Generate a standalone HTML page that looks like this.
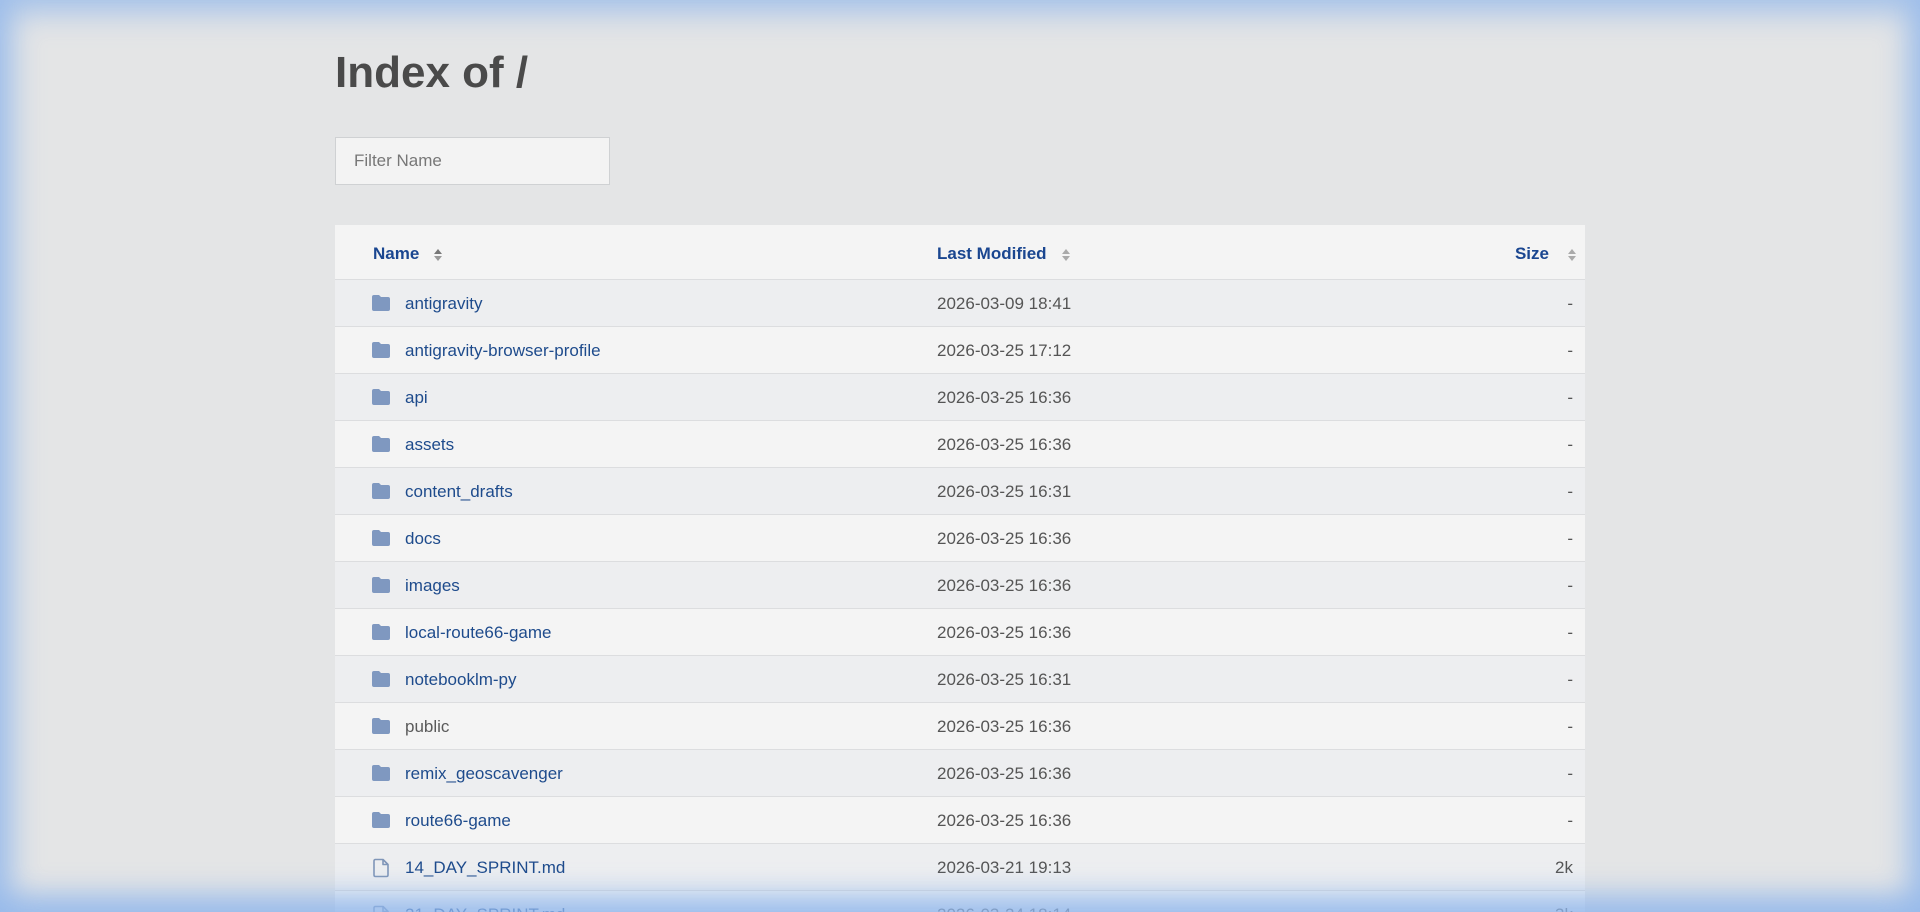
<!DOCTYPE html>
<html><head><meta charset="utf-8"><style>
html,body{margin:0;padding:0;width:1920px;height:912px;overflow:hidden;background:#e4e5e6;font-family:"Liberation Sans",sans-serif}
h1{position:absolute;left:335px;top:45px;margin:0;font-size:44px;font-weight:bold;color:#4a4a4a;line-height:56px}
.filter{position:absolute;left:335px;top:137px;width:275px;height:48px;background:#f3f3f3;border:1px solid #cfd1d3;box-sizing:border-box;font-size:17px;color:#777;padding-left:18px;line-height:46px}
.panel{position:absolute;left:335px;top:225px;width:1250px;height:687px;overflow:hidden;background:#f4f4f4}
.hdr{height:55px;position:relative;border-bottom:1px solid #dcdddf;box-sizing:border-box;font-weight:bold;color:#1a4690;font-size:17px}
.hdr span{position:absolute;top:19px}
.arr{display:inline-block;width:10px;height:14px;vertical-align:middle;margin-left:14px}
.row{height:47px;position:relative;border-bottom:1px solid #dcdddf;box-sizing:border-box;font-size:17px}
.row:nth-child(odd){background:#edeef0}
.row .n{position:absolute;left:70px;top:14px;color:#1e4b8c}
.row .d{position:absolute;left:602px;top:14px;color:#555}
.row .s{position:absolute;right:12px;top:14px;color:#555}
.row svg{position:absolute;left:36px;top:14px}
.glow{position:fixed;left:0;top:0;width:1920px;height:912px;pointer-events:none;box-shadow:inset 0 0 30px 12px rgba(140,180,235,.75),inset 0 -20px 30px -6px rgba(150,185,235,.6)}
</style></head><body>
<h1>Index of /</h1>
<div class="filter">Filter Name</div>
<div class="panel">
<div class="hdr">
<span style="left:38px">Name<svg class="arr" viewBox="0 0 10 14"><path d="M5 1L9 6H1z" fill="#777"/><path d="M5 13L9 8H1z" fill="#999"/></svg></span>
<span style="left:602px">Last Modified<svg class="arr" viewBox="0 0 10 14"><path d="M5 1L9 6H1z" fill="#aaa"/><path d="M5 13L9 8H1z" fill="#aaa"/></svg></span>
<span style="right:0px">Size<svg class="arr" style="margin-left:18px;margin-right:8px" viewBox="0 0 10 14"><path d="M5 1L9 6H1z" fill="#aaa"/><path d="M5 13L9 8H1z" fill="#aaa"/></svg></span>
</div>
<div>
<div class="row"><svg width="20" height="18" viewBox="0 0 20 18"><path d="M1 3Q1 1 3 1H8L10 3H17Q19 3 19 5V15Q19 17 17 17H3Q1 17 1 15Z" fill="#7f98c0"/></svg><span class="n">antigravity</span><span class="d">2026-03-09 18:41</span><span class="s">-</span></div>
<div class="row"><svg width="20" height="18" viewBox="0 0 20 18"><path d="M1 3Q1 1 3 1H8L10 3H17Q19 3 19 5V15Q19 17 17 17H3Q1 17 1 15Z" fill="#7f98c0"/></svg><span class="n">antigravity-browser-profile</span><span class="d">2026-03-25 17:12</span><span class="s">-</span></div>
<div class="row"><svg width="20" height="18" viewBox="0 0 20 18"><path d="M1 3Q1 1 3 1H8L10 3H17Q19 3 19 5V15Q19 17 17 17H3Q1 17 1 15Z" fill="#7f98c0"/></svg><span class="n">api</span><span class="d">2026-03-25 16:36</span><span class="s">-</span></div>
<div class="row"><svg width="20" height="18" viewBox="0 0 20 18"><path d="M1 3Q1 1 3 1H8L10 3H17Q19 3 19 5V15Q19 17 17 17H3Q1 17 1 15Z" fill="#7f98c0"/></svg><span class="n">assets</span><span class="d">2026-03-25 16:36</span><span class="s">-</span></div>
<div class="row"><svg width="20" height="18" viewBox="0 0 20 18"><path d="M1 3Q1 1 3 1H8L10 3H17Q19 3 19 5V15Q19 17 17 17H3Q1 17 1 15Z" fill="#7f98c0"/></svg><span class="n">content_drafts</span><span class="d">2026-03-25 16:31</span><span class="s">-</span></div>
<div class="row"><svg width="20" height="18" viewBox="0 0 20 18"><path d="M1 3Q1 1 3 1H8L10 3H17Q19 3 19 5V15Q19 17 17 17H3Q1 17 1 15Z" fill="#7f98c0"/></svg><span class="n">docs</span><span class="d">2026-03-25 16:36</span><span class="s">-</span></div>
<div class="row"><svg width="20" height="18" viewBox="0 0 20 18"><path d="M1 3Q1 1 3 1H8L10 3H17Q19 3 19 5V15Q19 17 17 17H3Q1 17 1 15Z" fill="#7f98c0"/></svg><span class="n">images</span><span class="d">2026-03-25 16:36</span><span class="s">-</span></div>
<div class="row"><svg width="20" height="18" viewBox="0 0 20 18"><path d="M1 3Q1 1 3 1H8L10 3H17Q19 3 19 5V15Q19 17 17 17H3Q1 17 1 15Z" fill="#7f98c0"/></svg><span class="n">local-route66-game</span><span class="d">2026-03-25 16:36</span><span class="s">-</span></div>
<div class="row"><svg width="20" height="18" viewBox="0 0 20 18"><path d="M1 3Q1 1 3 1H8L10 3H17Q19 3 19 5V15Q19 17 17 17H3Q1 17 1 15Z" fill="#7f98c0"/></svg><span class="n">notebooklm-py</span><span class="d">2026-03-25 16:31</span><span class="s">-</span></div>
<div class="row"><svg width="20" height="18" viewBox="0 0 20 18"><path d="M1 3Q1 1 3 1H8L10 3H17Q19 3 19 5V15Q19 17 17 17H3Q1 17 1 15Z" fill="#7f98c0"/></svg><span class="n" style="color:#5a5a5a">public</span><span class="d">2026-03-25 16:36</span><span class="s">-</span></div>
<div class="row"><svg width="20" height="18" viewBox="0 0 20 18"><path d="M1 3Q1 1 3 1H8L10 3H17Q19 3 19 5V15Q19 17 17 17H3Q1 17 1 15Z" fill="#7f98c0"/></svg><span class="n">remix_geoscavenger</span><span class="d">2026-03-25 16:36</span><span class="s">-</span></div>
<div class="row"><svg width="20" height="18" viewBox="0 0 20 18"><path d="M1 3Q1 1 3 1H8L10 3H17Q19 3 19 5V15Q19 17 17 17H3Q1 17 1 15Z" fill="#7f98c0"/></svg><span class="n">route66-game</span><span class="d">2026-03-25 16:36</span><span class="s">-</span></div>
<div class="row"><svg width="20" height="20" viewBox="0 0 20 20"><path d="M4 1.5H12L17 6.5V17Q17 18.5 15.5 18.5H4.5Q3 18.5 3 17V3Q3 1.5 4.5 1.5ZM12 1.5V6.5H17" fill="none" stroke="#8096b8" stroke-width="1.6" stroke-linejoin="round"/></svg><span class="n">14_DAY_SPRINT.md</span><span class="d">2026-03-21 19:13</span><span class="s">2k</span></div>
<div class="row"><svg width="20" height="20" viewBox="0 0 20 20"><path d="M4 1.5H12L17 6.5V17Q17 18.5 15.5 18.5H4.5Q3 18.5 3 17V3Q3 1.5 4.5 1.5ZM12 1.5V6.5H17" fill="none" stroke="#8096b8" stroke-width="1.6" stroke-linejoin="round"/></svg><span class="n">21_DAY_SPRINT.md</span><span class="d">2026-03-24 18:14</span><span class="s">3k</span></div>
</div>
</div>
<div class="glow"></div>
</body></html>
